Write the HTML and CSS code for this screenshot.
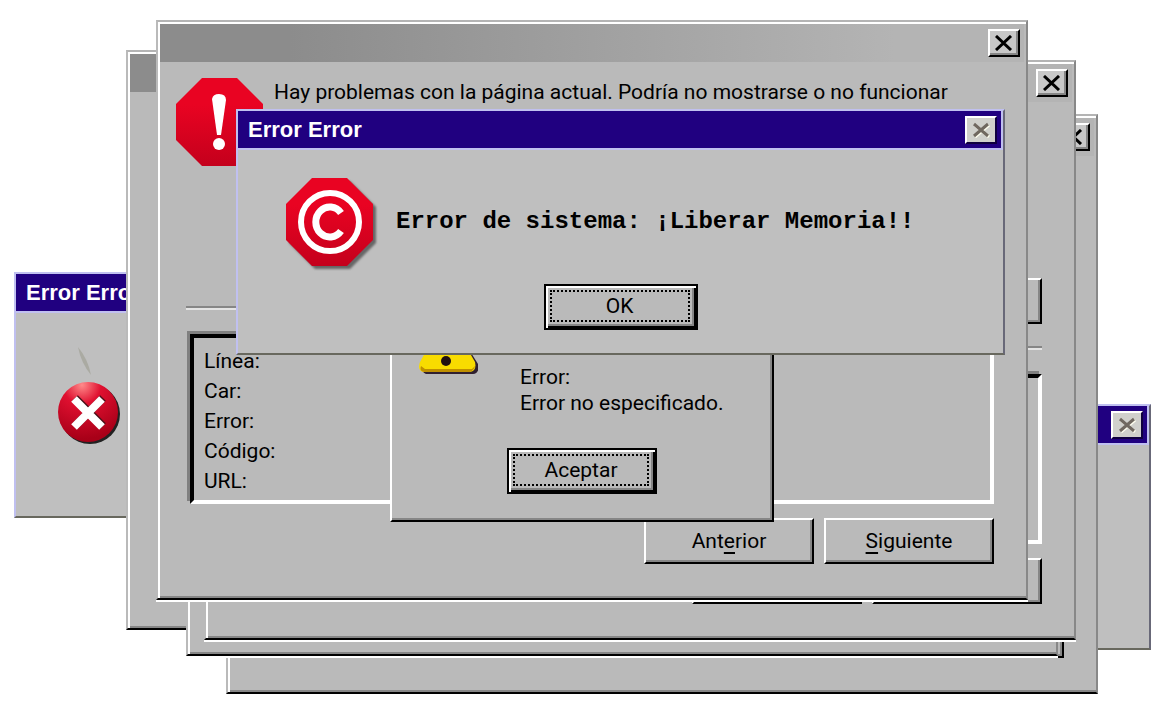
FILE: index.html
```
<!doctype html>
<html lang="es">
  <head>
    <meta charset="UTF-8" />
    <meta name="viewport" content="width=device-width, initial-scale=1.0" />
    <title>Error Error</title>
    <link rel="stylesheet" href="styles.css">
  </head>
  <body>
    <main class="desktop">
      <!-- background windows -->
      <section class="dialog dialog-left">
        <div class="dialog-bar">
          <h2>Error Error</h2>
        </div>
        <div class="dialog-content">
          <svg class="icon-cross" viewBox="0 0 64 64" aria-hidden="true">
            <defs>
              <radialGradient id="ball" cx="0.4" cy="0.05" r="0.9">
                <stop offset="0" stop-color="#ff8a8a" />
                <stop offset="0.35" stop-color="#e01030" />
                <stop offset="1" stop-color="#a80018" />
              </radialGradient>
            </defs>
            <path d="M20 -34Q23 -18 33 -6Q30 -22 20 -34Z" fill="#aaaaa2" />
            <circle cx="32" cy="33" r="30" fill="#222" />
            <circle cx="30" cy="31" r="30" fill="url(#ball)" />
            <path d="M16 18L44 46M44 18L16 46" stroke="#4a1018" stroke-width="8" transform="translate(1 -1)" />
            <path d="M16 18L44 46M44 18L16 46" stroke="#fff" stroke-width="8" />
          </svg>
        </div>
      </section>

      <section class="dialog dialog-right">
        <div class="dialog-bar">
          <h2></h2>
          <button class="close close-grey" aria-label="Cerrar">
            <svg viewBox="0 0 18 16"><path d="M3 3L17 15M17 3L3 15" stroke="#fffff0" /><path d="M2 2L16 14M16 2L2 14" stroke="#706860" /></svg>
          </button>
        </div>
      </section>

      <section class="window window-1">
        <div class="window-bar"></div>
      </section>

      <section class="window window-2">
        <div class="window-bar">
          <button class="close" aria-label="Cerrar">
            <svg viewBox="0 0 18 16"><path d="M1 1L16 15M16 1L1 15" stroke="#000" /></svg>
          </button>
        </div>
        <div class="window-content">
          <div class="message"></div>
          <div class="options"><button class="btn" aria-label="Detalles"></button></div>
          <hr>
          <div class="details"></div>
          <div class="nav">
            <button class="btn" aria-label="Anterior"></button>
            <button class="btn" aria-label="Siguiente"></button>
          </div>
        </div>
      </section>

      <section class="window window-3">
        <div class="window-bar"></div>
      </section>

      <section class="window window-4">
        <div class="window-bar">
          <button class="close" aria-label="Cerrar">
            <svg viewBox="0 0 18 16"><path d="M1 1L16 15M16 1L1 15" stroke="#000" /></svg>
          </button>
        </div>
        <div class="window-content">
          <div class="message"></div>
          <div class="options"><button class="btn" aria-label="Detalles"></button></div>
          <hr>
          <div class="details"></div>
          <div class="nav">
            <button class="btn" aria-label="Anterior"></button>
            <button class="btn" aria-label="Siguiente"></button>
          </div>
        </div>
      </section>

      <!-- script error window -->
      <section class="window window-5">
        <div class="window-bar">
          <button class="close" aria-label="Cerrar">
            <svg viewBox="0 0 18 16"><path d="M1 1L16 15M16 1L1 15" stroke="#000" /></svg>
          </button>
        </div>
        <div class="window-content">
          <div class="message">
            <svg class="icon-stop" viewBox="0 0 88 88" aria-hidden="true">
              <defs>
                <linearGradient id="red" x1="0" y1="0" x2="0" y2="1">
                  <stop offset="0.3" stop-color="#e90322" />
                  <stop offset="1" stop-color="#c4001c" />
                </linearGradient>
              </defs>
              <path d="M26 0H61L87 26V62L61 88H26L0 62V26Z" fill="url(#red)" />
              <path d="M36 21Q37 16 43 16Q50 16 50 22L45 57H41Z" fill="#fff" />
              <circle cx="43" cy="66" r="6" fill="#fff" />
            </svg>
            <p>Hay problemas con la página actual. Podría no mostrarse o no funcionar</p>
          </div>
          <div class="options"></div>
          <hr>
          <ul class="details">
            <li>Línea:</li>
            <li>Car:</li>
            <li>Error:</li>
            <li>Código:</li>
            <li>URL:</li>
          </ul>
          <div class="nav">
            <button class="btn">Ant<u>e</u>rior</button>
            <button class="btn"><u>S</u>iguiente</button>
          </div>
        </div>
      </section>

      <!-- unspecified error -->
      <section class="alert">
        <svg class="icon-warning" viewBox="0 0 60 56" aria-hidden="true">
          <path d="M33 3L60 46Q62 55 55 56H8Q4 55 5 50Z" fill="#302030" />
          <path d="M24 4Q29 -2 34 4L57 44Q59 53 52 54H5Q-1 52 2 44Z" fill="#f8dc00" />
          <path d="M3 48Q1 53 6 54H52Q56 52 57 48L54 51H7Z" fill="#c09000" />
          <path d="M26 14H32L30 36H28Z" fill="#201010" />
          <circle cx="28" cy="43" r="5" fill="#201010" />
        </svg>
        <div class="alert-text">
          <p>Error:</p>
          <p>Error no especificado.</p>
        </div>
        <button class="btn btn-default"><span>Aceptar</span></button>
      </section>

      <!-- system error -->
      <section class="dialog dialog-top">
        <div class="dialog-bar">
          <h2>Error Error</h2>
          <button class="close close-grey" aria-label="Cerrar">
            <svg viewBox="0 0 18 16"><path d="M3 3L17 15M17 3L3 15" stroke="#fffff0" /><path d="M2 2L16 14M16 2L2 14" stroke="#706860" /></svg>
          </button>
        </div>
        <div class="dialog-content">
          <div class="system-error">
            <svg class="icon-copy" viewBox="0 0 88 88" aria-hidden="true">
              <path d="M26 0H61L87 26V62L61 88H26L0 62V26Z" fill="url(#red)" />
              <circle cx="44" cy="44" r="29" fill="none" stroke="#fff" stroke-width="6" />
              <path d="M55 35A14 15 0 1 0 55 53" fill="none" stroke="#fff" stroke-width="7" />
            </svg>
            <p>Error de sistema: ¡Liberar Memoria!!</p>
          </div>
          <button class="btn btn-default"><span>OK</span></button>
        </div>
      </section>
    </main>
  </body>
</html>
```

FILE: styles.css
```
* {
  box-sizing: border-box;
}
body {
  margin: 0;
  background-color: #ffffff;
  color: #000000;
  font-family: Roboto, "Liberation Sans", sans-serif;
  font-size: 21px;
  line-height: 26px;
}
h2, p, ul {
  margin: 0;
  padding: 0;
}
button {
  font: inherit;
  color: inherit;
}
.desktop {
  position: relative;
  min-height: 100vh;
  overflow: hidden;
}

/* grey windows */
.window {
  position: absolute;
  width: 872px;
  padding: 2px;
  background-color: #bababa;
  border: 2px solid;
  border-color: #b4b4b4 #888888 #000000 #bababa;
  box-shadow: inset 2px 2px #ffffff, inset 0 -2px #868686;
  height: 580px;
}
.window-1 { left: 126px; top: 50px; }
.window-2 { left: 226px; top: 114px; }
.window-3 { left: 186px; top: 76px; }
.window-4 { left: 204px; top: 60px; }
.window-5 { left: 156px; top: 20px; }
.window-3,
.window-4,
.window-5 {
  box-shadow: inset 2px 2px #ffffff, inset 0 -2px #868686, 0 2px #ffffff;
}
.window-bar {
  display: flex;
  justify-content: flex-end;
  align-items: center;
  height: 38px;
  padding-right: 4px;
  background: linear-gradient(to right, #8c8c8c, #8c8c8c 15%, #b4b4b4 85%);
}
.window-content {
  padding: 16px 30px 0 26px;
}
.message {
  display: flex;
  gap: 10px;
  height: 160px;
  margin-left: -10px;
}
.message p {
  line-height: 28px;
}
.options {
  display: flex;
  justify-content: flex-end;
  height: 68px;
}
hr {
  height: 4px;
  margin: 0 0 24px;
  border: 0;
  border-top: 2px solid #868686;
  border-bottom: 2px solid #e4e4e4;
}
.details {
  height: 170px;
  margin-left: 4px;
  padding: 8px 10px;
  list-style: none;
  line-height: 30px;
  border: 4px solid;
  border-color: #000000 #ffffff #ffffff #000000;
  box-shadow: -3px -3px #808080;
}
.nav {
  display: flex;
  justify-content: flex-end;
  gap: 10px;
  padding-top: 14px;
}

/* blue dialogs */
.dialog {
  position: absolute;
  width: 769px;
  height: 246px;
  background-color: #bfbfbf;
  border: 2px solid;
  border-color: #c0c0f0 #686878 #68685e #c0c0f0;
}
.dialog-left { left: 14px; top: 272px; }
.dialog-right { left: 382px; top: 404px; }
.dialog-top { left: 236px; top: 109px; }
.dialog-bar {
  display: flex;
  justify-content: space-between;
  align-items: center;
  height: 39px;
  padding: 0 4px 0 10px;
  background-color: #200080;
  border-right: 2px solid #c0c0f0;
  border-bottom: 2px solid #c0c0f0;
}
.dialog-bar h2 {
  color: #ffffff;
  font-family: "Liberation Sans", Arial, sans-serif;
  font-size: 22px;
  line-height: 26px;
}
.dialog-content {
  display: flex;
  flex-direction: column;
  align-items: center;
  padding-top: 28px;
}
.system-error {
  display: flex;
  align-items: center;
  align-self: flex-start;
  gap: 22px;
  padding-left: 48px;
}
.system-error p {
  font-family: "Liberation Mono", monospace;
  font-size: 24px;
  font-weight: bold;
}

/* unspecified error */
.alert {
  position: absolute;
  left: 390px;
  top: 260px;
  width: 384px;
  height: 262px;
  display: grid;
  grid-template-columns: 60px 1fr;
  grid-template-rows: 112px auto;
  align-items: end;
  align-content: start;
  column-gap: 42px;
  row-gap: 32px;
  padding: 42px 26px 0;
  background-color: #bababa;
  border: 2px solid;
  border-color: #ffffff #000000 #000000 #ffffff;
  box-shadow: inset -2px -2px #868686;
}
.alert .icon-warning {
  margin-bottom: 42px;
}
.alert .btn {
  grid-column: 1 / 3;
  justify-self: center;
}

/* buttons */
.btn {
  width: 170px;
  height: 46px;
  padding: 0;
  background-color: #bababa;
  border: 2px solid;
  border-color: #ffffff #000000 #000000 #ffffff;
  border-radius: 0;
  box-shadow: inset -2px -2px #868686;
}
.btn u {
  text-underline-offset: 4px;
}
.btn-default {
  width: 150px;
  padding: 4px;
  border-color: #000000;
  box-shadow: inset 2px 2px #ffffff, inset -2px -2px #000000, inset -4px -4px #868686;
}
.btn-default span {
  display: block;
  margin: 0 2px 2px 0;
  line-height: 28px;
  border: 2px dotted #000000;
}
.dialog-content .btn {
  width: 154px;
  margin-top: 18px;
}
.close {
  display: flex;
  align-items: center;
  justify-content: center;
  width: 32px;
  height: 28px;
  padding: 0;
  background-color: #c8c8c8;
  border: 2px solid;
  border-color: #ffffff #000000 #000000 #ffffff;
  box-shadow: inset -2px -2px #868686;
}
.close svg {
  width: 18px;
  height: 16px;
  fill: none;
  stroke-width: 3;
}
.close-grey {
  background-color: #d0d0cc;
  border-color: #ffffff #100040 #100040 #ffffff;
  box-shadow: none;
}

/* icons */
.icon-stop {
  flex: none;
  width: 88px;
  height: 88px;
}
.icon-copy {
  flex: none;
  width: 88px;
  height: 88px;
  overflow: visible;
  filter: drop-shadow(3px 3px 1px #666666);
}
.icon-cross {
  align-self: flex-start;
  width: 64px;
  height: 64px;
  margin: 40px 42px 0;
  overflow: visible;
}
.icon-warning {
  width: 60px;
  height: 56px;
}
```
